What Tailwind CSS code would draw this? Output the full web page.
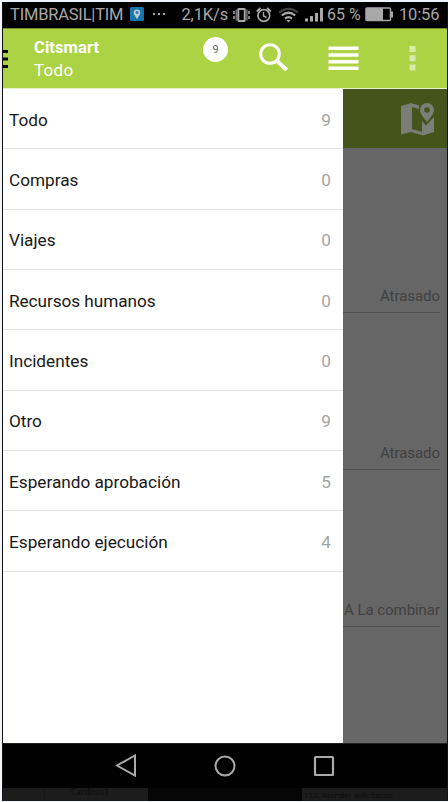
<!DOCTYPE html>
<html lang="es">
<head>
<meta charset="utf-8">
<title>Citsmart</title>
<script src="https://cdn.jsdelivr.net/npm/@tailwindcss/browser@4"></script>
</head>
<body class="w-[448px] h-[802px] overflow-hidden bg-[#f1f4f8] pt-[2px] pl-[2px] font-[Roboto,sans-serif]">
<div class="w-[446px] h-[799px] flex flex-col bg-white border-l border-r border-[#111] overflow-hidden">
  <!-- Status bar -->
  <div class="h-[26px] shrink-0 bg-black text-[#a8a8a8] flex items-center text-[16.5px] leading-[24px] whitespace-nowrap">
    <span class="ml-[7px] w-[120px] tracking-[-0.200px]">TIMBRASIL|TIM</span>
    <svg class="shrink-0 -mt-[2px]" width="14" height="14" viewBox="0 0 14 14"><rect width="14" height="14" rx="1.5" fill="#1676ad"/><path d="M7 12C5 9 3.7 7.500 3.700 5.800a3.300 3.300 0 0 1 6.600 0C10.300 7.500 9 9 7 12Z" fill="#b9cbd5"/><circle cx="7" cy="5.600" r="1.400" fill="#1676ad"/></svg>
    <svg class="shrink-0 ml-[9px] -mt-[2px]" width="12" height="4" viewBox="0 0 12 4" fill="#a8a8a8"><rect x="0" y="1" width="2" height="2"/><rect x="5" y="1" width="2" height="2"/><rect x="10" y="1" width="2" height="2"/></svg>
    <span class="ml-[16.500px] w-[51.500px] tracking-[-0.150px]">2,1K/s</span>
    <svg class="shrink-0 -mt-[3px]" width="92" height="22" viewBox="233 3 92 22" fill="none" stroke="#a8a8a8">
      <rect x="238.300" y="9" width="6.400" height="12" rx=".5" stroke-width="1.900"/>
      <path d="M234 11v3M234 16v3M249 11v3M249 16v3" stroke-width="1.500"/><path d="M236.200 9.500v11M246.900 9.500v11" stroke-width="1"/>
      <circle cx="263.800" cy="15.500" r="5.900" stroke-width="1.700"/>
      <path d="M256.800 11.500l3.700-3.500M270.800 11.500l-3.700-3.500" stroke-width="1.900"/><path d="M263.500 12v4l3 1.500" stroke-width="1.400"/>
      <path d="M279 12.500q9.500-7.500 19 0" stroke="#444" stroke-width="2"/>
      <path d="M281.800 15.500q6.700-5.500 13.400 0M285 18.600q3.500-3 7 0" stroke-width="2.200"/><path d="M286.500 20h4l-2 2.500z" fill="#a8a8a8" stroke="none"/>
      <path d="M306.500 18.500v3M311.500 16v5.500M316.500 13v8.500M321.500 8v13.500" stroke-width="3"/>
    </svg>
    <span class="ml-[2px] w-[38px] text-[16px] tracking-[0px]">65 %</span>
    <svg class="shrink-0 -mt-[2px]" width="29" height="15" viewBox="0 0 29 15"><rect x="1" y="1" width="24.500" height="12.500" rx="1" fill="none" stroke="#a8a8a8" stroke-width="1.500"/><rect x="1" y="1" width="17" height="12.500" fill="#a8a8a8"/><path d="M27 4.500v6" stroke="#a8a8a8" stroke-width="2"/></svg>
    <span class="ml-[5px] tracking-[-0.150px]">10:56</span>
  </div>
  <!-- App bar -->
  <header class="h-[60px] shrink-0 bg-[#abd344] text-white flex border-t border-[#718b2d]">
    <svg class="shrink-0 mt-[20px]" width="6" height="22" viewBox="0 0 6 22" fill="#080a02"><path d="M0 1h5v3H0zM0 8.500h5v3H0zM0 16h5v3H0z"/></svg>
    <div class="ml-[25px] w-[169px] pt-[7px] text-[16.500px] leading-[23px]">
      <div class="font-bold tracking-[0.100px]">Citsmart</div>
      <div class="tracking-[0.300px] text-[17px]">Todo</div>
    </div>
    <div class="mt-[8px] size-[25px] shrink-0 rounded-full bg-white text-[#666] text-[11px] leading-[25px] text-center">9</div>
    <svg class="shrink-0 ml-[31px] mt-[13px]" width="31" height="32" viewBox="0 0 31 32" fill="none" stroke="white"><circle cx="11" cy="12" r="9.300" stroke-width="3"/><path d="M17.500 18.500l10.300 9.500" stroke-width="4"/></svg>
    <svg class="shrink-0 ml-[38px] mt-[17px]" width="31" height="25" viewBox="0 0 31 25" fill="white"><path d="M.500.500h30v3.500H.500zM.500 7.300h30v3.500H.500zM.500 14h30v3.500H.500zM.500 20.500h30V24H.500z"/></svg>
    <svg class="shrink-0 ml-[50px] mt-[17px]" width="7" height="26" viewBox="0 0 7 26" fill="#d9eba8"><path d="M.500 0h6v6h-6zM.500 9.200h6v6h-6zM.500 18.500h6v6h-6z"/></svg>
  </header>
  <main class="h-[655px] shrink-0 flex border-t border-[#e7f2ca]">
    <!-- Drawer -->
    <nav class="w-[340px] shrink-0 bg-white text-[17.200px] text-[#181818]">
      <div class="h-[60.350px] border-b border-[#e5e5e5] flex items-center justify-between pt-[4px] pl-[6px] pr-[12px]"><span>Todo</span><span class="text-[#a4a4a4]">9</span></div>
      <div class="h-[60.350px] border-b border-[#e5e5e5] flex items-center justify-between pt-[4px] pl-[6px] pr-[12px]"><span>Compras</span><span class="text-[#a4a4a4]">0</span></div>
      <div class="h-[60.350px] border-b border-[#e5e5e5] flex items-center justify-between pt-[3px] pl-[6px] pr-[12px]"><span>Viajes</span><span class="text-[#a4a4a4]">0</span></div>
      <div class="h-[60.350px] border-b border-[#e5e5e5] flex items-center justify-between pt-[4px] pl-[6px] pr-[12px]"><span class="tracking-[-0.050px]">Recursos humanos</span><span class="text-[#a4a4a4]">0</span></div>
      <div class="h-[60.350px] border-b border-[#e5e5e5] flex items-center justify-between pt-[4px] pl-[6px] pr-[12px]"><span>Incidentes</span><span class="text-[#a4a4a4]">0</span></div>
      <div class="h-[60.350px] border-b border-[#e5e5e5] flex items-center justify-between pt-[3px] pl-[6px] pr-[12px]"><span>Otro</span><span class="text-[#a4a4a4]">9</span></div>
      <div class="h-[60.350px] border-b border-[#e5e5e5] flex items-center justify-between pt-[4px] pl-[6px] pr-[12px]"><span>Esperando aprobación</span><span class="text-[#a4a4a4]">5</span></div>
      <div class="h-[60.350px] border-b border-[#e5e5e5] flex items-center justify-between pt-[4px] pl-[6px] pr-[12px]"><span>Esperando ejecución</span><span class="text-[#a4a4a4]">4</span></div>
    </nav>
    <!-- Dimmed task list -->
    <section class="flex-1 min-w-0 bg-[#666] text-[#404040] text-[15px] tracking-[-0.050px] whitespace-nowrap">
      <div class="h-[59px] bg-[#45541b] flex justify-end pr-[12px] pt-[12px]">
        <svg width="35" height="36" viewBox="0 0 35 36" fill="#7b7d77"><path fill-rule="evenodd" d="M1 5 11 2 19 4.500V8L12 6V28L22 31V20L26 24.500 34 16V31L23 34.500 11 31 1 33.500Z"/><path fill-rule="evenodd" d="M27 2a7 7 0 0 1 7 7c0 4-4 8-7 12-3-4-7-8-7-12a7 7 0 0 1 7-7Zm0 4.200a2.800 2.800 0 1 0 0 5.600 2.800 2.800 0 0 0 0-5.600Z"/></svg>
      </div>
      <div class="h-[165px] mr-[7px] border-b border-[#505050] flex items-end justify-end pb-[5px]">Atrasado</div>
      <div class="h-[157px] mr-[7px] border-b border-[#505050] flex items-end justify-end pb-[5px]">Atrasado</div>
      <div class="h-[157px] mr-[7px] border-b border-[#505050] flex items-end justify-end pb-[5px]">A La combinar</div>
    </section>
  </main>
  <!-- System navigation -->
  <div class="h-[45px] shrink-0 bg-black border-t border-[#222] flex items-center">
    <svg class="ml-[112px]" width="22" height="24" viewBox="0 0 22 24" fill="none" stroke="#aaa" stroke-width="2"><path d="M20 1.500v20L2 11.500Z"/></svg>
    <svg class="ml-[76px]" width="24" height="24" viewBox="0 0 24 24" fill="none" stroke="#aaa" stroke-width="2"><circle cx="12" cy="12" r="9.500"/></svg>
    <svg class="ml-[76px]" width="22" height="22" viewBox="0 0 22 22" fill="none" stroke="#aaa" stroke-width="2.200"><rect x="2" y="2" width="18" height="18" rx=".500"/></svg>
  </div>
  <div class="h-[13px] shrink-0 bg-[#1c1c1c] flex text-[#0c0c0c] font-[Open_Sans,sans-serif] text-[9px] leading-[11px] whitespace-nowrap">
    <div class="w-[42px] shrink-0 border-r border-[#161616]"></div>
    <div class="w-[103px] shrink-0 pl-[26px] text-[8.500px] leading-[8px]">Cardoso1</div>
    <div class="w-[154px] shrink-0 bg-[#060606]"></div>
    <div class="pl-[2px] text-[8px] leading-[13px]">112. Atender solicitacao</div>
  </div>
</div>
</body>
</html>
